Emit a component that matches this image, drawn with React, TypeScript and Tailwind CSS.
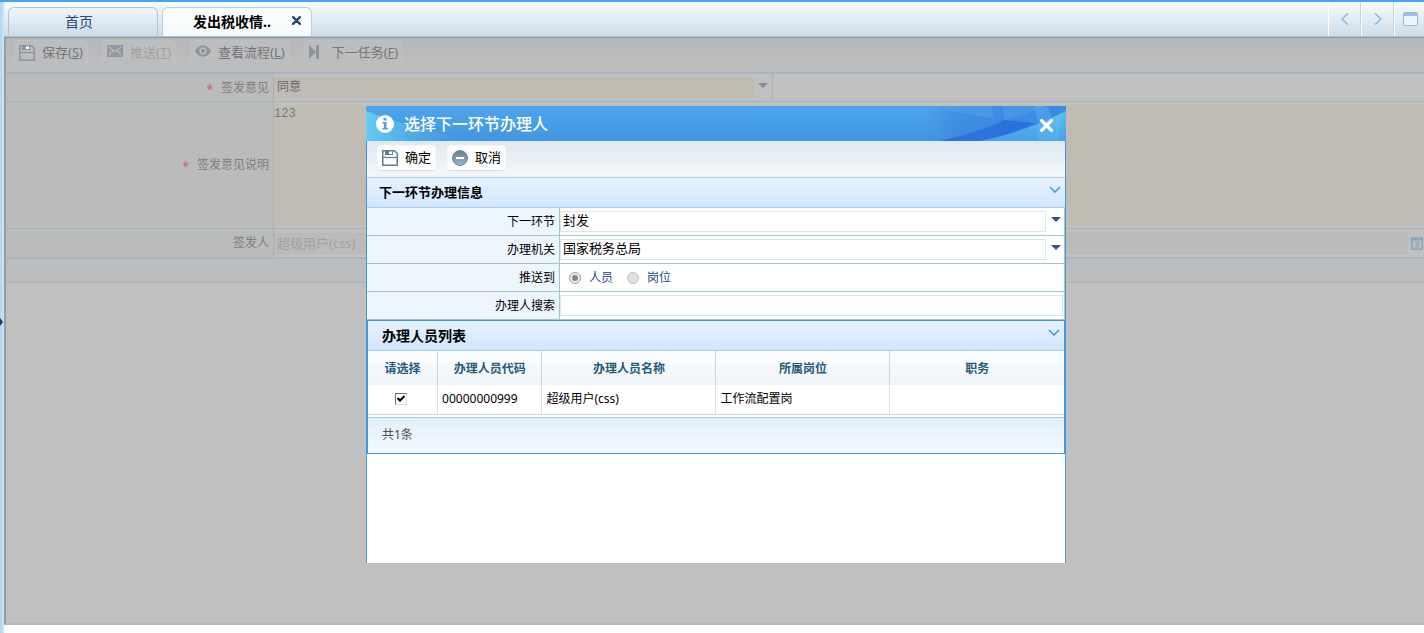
import { useState } from "react";
import type { ReactNode } from "react";

function SaveIcon({ className }: { className: string }) {
  return (
    <svg viewBox="0 0 16 16" className={className} fill="none" stroke="currentColor">
      <path d="M0.75 0.75H12.5L15.25 3.5V15.25H0.75Z" strokeWidth="1.5" />
      <path d="M1 7.5H15" strokeWidth="1.2" />
      <path d="M3 1H11V5H3Z" fill="currentColor" stroke="none" />
      <path d="M7 1.5H10V4H7Z" fill="#fff" stroke="none" />
    </svg>
  );
}

function MailIcon() {
  return (
    <svg viewBox="0 0 16 12" className="mb-1 h-3 w-4 shrink-0">
      <path d="M0 0H16V12H0Z" fill="#92989d" />
      <path d="M2 2L8 6.5L14 2M2 10L6 5.5M14 10L10 5.5" fill="none" stroke="#babbbc" strokeWidth="1.2" />
    </svg>
  );
}

function EyeIcon() {
  return (
    <svg viewBox="0 0 16 12" className="mb-1 h-3 w-4 shrink-0">
      <path d="M0 6C3.5 -1.5 12.5 -1.5 16 6C12.5 13.5 3.5 13.5 0 6Z" fill="#8b959e" />
      <circle cx="8" cy="6" r="2.8" fill="none" stroke="#bcbdbf" strokeWidth="1.6" />
    </svg>
  );
}

function NextIcon() {
  return (
    <svg viewBox="0 0 16 14" className="mb-[2px] h-[14px] w-4 shrink-0" fill="#8b959e">
      <path d="M0 0L7 7L0 14ZM7 0H10V14H7Z" />
    </svg>
  );
}

function CancelIcon() {
  return (
    <svg viewBox="0 0 16 16" className="size-4 shrink-0">
      <defs>
        <linearGradient id="cancelFill" x1="0" x2="0" y1="0" y2="1">
          <stop offset="0" stopColor="#657f93" />
          <stop offset="1" stopColor="#9db4c6" />
        </linearGradient>
      </defs>
      <circle cx="8" cy="8" r="7.5" fill="url(#cancelFill)" stroke="#6e879b" />
      <path d="M4 7H12V9H4Z" fill="#fff" />
    </svg>
  );
}

function CloseIcon({ className }: { className: string }) {
  return (
    <svg viewBox="0 0 12 12" className={className} fill="none" stroke="currentColor" strokeLinecap="round">
      <path d="M1.5 1.5L10.5 10.5M10.5 1.5L1.5 10.5" strokeWidth="3" />
    </svg>
  );
}

function Chevron({ className }: { className: string }) {
  return (
    <svg viewBox="0 0 12 7" className={className} fill="none" stroke="currentColor">
      <path d="M1 1L6 6L11 1" strokeWidth="1.5" />
    </svg>
  );
}

function Caret({ className }: { className: string }) {
  return (
    <svg viewBox="0 0 10 5" className={className} fill="currentColor">
      <path d="M0 0H10L5 5Z" />
    </svg>
  );
}

function CalendarIcon() {
  return (
    <svg viewBox="0 0 12 14" className="h-[14px] w-3 shrink-0">
      <rect x="0.75" y="1.75" width="10.5" height="11.5" rx="1" fill="#b9bdc1" stroke="#8ba4bd" strokeWidth="1.5" />
      <path d="M0.5 1.5H11.5V4.5H0.5Z" fill="#8ba4bd" />
      <path d="M3 0V2.5M6 0V2.5M9 0V2.5" stroke="#a5b5c4" />
      <path d="M4.5 6.5H7V11M5 8.5H7M4.5 11H7" fill="none" stroke="#8ba4bd" strokeWidth="1.2" />
    </svg>
  );
}

function HeaderArt() {
  return (
    <svg viewBox="0 0 140 35" className="absolute top-0 right-0 h-[35px] w-[140px]">
      <defs>
        <linearGradient id="headDeep" x1="0" x2="1">
          <stop offset="0" stopColor="#3682dc" stopOpacity="0" />
          <stop offset="0.25" stopColor="#3682dc" stopOpacity="0.6" />
          <stop offset="1" stopColor="#3a86e2" stopOpacity="0.9" />
        </linearGradient>
        <linearGradient id="headBand" x1="0" x2="1">
          <stop offset="0" stopColor="#2e74d8" />
          <stop offset="1" stopColor="#2a70dc" />
        </linearGradient>
        <linearGradient id="headGlow" x1="0" x2="0" y1="0" y2="1">
          <stop offset="0" stopColor="#5cbcee" />
          <stop offset="1" stopColor="#47a2e8" />
        </linearGradient>
      </defs>
      <path d="M0 0H140V35H0Z" fill="url(#headDeep)" />
      <path d="M17 0H66L68 12Q40 8 20 4Z" fill="#56a7ec" opacity="0.45" />
      <path d="M76 0H120Q102 8 79 14Z" fill="#56a7ec" opacity="0.4" />
      <path d="M14 35Q50 27 79 14L110 17Q85 29 54 35Z" fill="url(#headBand)" />
      <path d="M79 14Q103 8 122 0H140V5L110 17Z" fill="#3c8ce4" />
      <path d="M54 35Q100 26 140 5V35Z" fill="url(#headGlow)" />
      <path d="M108 0L112 16V35H132L136 7L130 0Z" fill="#74c8f4" opacity="0.25" />
      <path d="M121 0H131L135 7L126 11Z" fill="#2e7be0" opacity="0.6" />
    </svg>
  );
}

interface PageButtonProps {
  icon: ReactNode;
  text: string;
  hotKey: string;
  disabled?: boolean;
}

function PageButton({ icon, text, hotKey, disabled = false }: PageButtonProps) {
  return (
    <button
      type="button"
      disabled={disabled}
      className="flex h-[26px] items-center gap-[7px] rounded-sm border border-[#c0c0c0] bg-[#bcbdbe] px-1 text-[13px] text-[#737578] disabled:text-[#a0a2a4]">
      {icon}
      <span>
        {text}(<u>{hotKey}</u>)
      </span>
    </button>
  );
}

function PageLabel({ id, text, required = false }: { id: string; text: string; required?: boolean }) {
  return (
    <label
      htmlFor={id}
      className="flex w-[268px] shrink-0 items-center justify-end gap-2 border-r border-[#a9b2b3] bg-[#babbbd] pr-1 text-xs text-[#7d7e80]">
      {required && <span className="pt-1 font-bold text-[#d07070]">*</span>}
      {text}
    </label>
  );
}

function Row({ id, label, children }: { id?: string; label: string; children: ReactNode }) {
  return (
    <div className="flex h-7 border-b border-[#a3c6c4]">
      <label htmlFor={id} className="flex w-[193px] shrink-0 items-center justify-end border-r border-[#a3c6c4] bg-[#edf5fd] pr-1">
        {label}
      </label>
      <div className="flex min-w-0 flex-1 items-center">{children}</div>
    </div>
  );
}

function ComboBox({ id, value }: { id: string; value: string }) {
  return (
    <div className="flex flex-1 items-center gap-[5px] pr-[3px]">
      <select id={id} className="h-[21px] min-w-0 flex-1 appearance-none border border-[#dbe7ee] bg-white px-[2px] pb-1 text-[13px] leading-4">
        <option>{value}</option>
      </select>
      <Caret className="mb-1 h-[5px] w-[10px] text-[#2f5091]" />
    </div>
  );
}

function SectionTitle({ text, className }: { text: string; className: string }) {
  return (
    <div className="flex h-[30px] items-center justify-between border-b border-[#a9cbe6] bg-linear-to-b from-[#e7f2fe] to-[#d0e6fd] pr-1">
      <h2 className={className}>{text}</h2>
      <button type="button" aria-label="收起" className="mb-[6px]">
        <Chevron className="h-[7px] w-3 text-[#3e97dc]" />
      </button>
    </div>
  );
}

const columns = ["请选择", "办理人员代码", "办理人员名称", "所属岗位", "职务"];
const people = [{ code: "00000000999", name: "超级用户(css)", post: "工作流配置岗", duty: "" }];
const radioClass =
  "size-3 appearance-none rounded-full border border-[#c2c2c2] bg-[#e0e0e0] checked:border-[#a2a2a2] checked:bg-radial checked:from-[#858585] checked:from-35% checked:to-[#ededed] checked:to-50%";

function HandlerDialog() {
  const [target, setTarget] = useState("person");
  const [checked, setChecked] = useState(true);

  return (
    <div role="dialog" aria-label="选择下一环节办理人" className="w-[700px] bg-white text-xs text-black">
      <header className="relative flex h-[35px] items-center justify-between bg-linear-to-b from-[#4ea4ee] to-[#4196df] pr-[13px] pl-[10px] text-white">
        <svg viewBox="0 0 110 35" className="absolute top-0 left-0 h-[35px] w-[110px]">
          <defs>
            <linearGradient id="headLeft" x1="0" x2="1">
              <stop offset="0" stopColor="#68cbf4" />
              <stop offset="0.5" stopColor="#52b0ea" stopOpacity="0.6" />
              <stop offset="1" stopColor="#4aa0e8" stopOpacity="0" />
            </linearGradient>
          </defs>
          <path d="M0 5Q50 24 110 35H0Z" fill="url(#headLeft)" />
        </svg>
        <div className="relative flex items-center gap-[10px]">
          <svg viewBox="0 0 18 18" className="size-[18px]">
            <circle cx="9" cy="9" r="9" fill="#fff" />
            <path d="M7.5 3H10.5V5.5H7.5ZM6.5 7H10.5V13H12V14.5H6.5V13H7.8V8.5H6.5Z" fill="#4ba3e8" />
          </svg>
          <h1 className="text-base font-medium">选择下一环节办理人</h1>
        </div>
        <HeaderArt />
        <button type="button" aria-label="关闭" className="relative mt-1">
          <CloseIcon className="size-[13px]" />
        </button>
      </header>

      <div className="border-x border-[#4398db] pb-[109px]">
        <div className="flex h-[37px] items-center gap-[11px] border-b border-[#a9cbe6] bg-linear-to-b from-[#dfe9f0] to-[#f3f7fa] px-[10px] pb-[2px]">
          <button type="button" className="flex h-[26px] items-center gap-[7px] rounded-sm border border-[#f8f8f8] border-b-[#d9dddf] bg-[#fcfcfc] px-1 text-[13px]">
            <SaveIcon className="size-4 text-[#637d92]" />
            确定
          </button>
          <button type="button" className="flex h-[26px] items-center gap-[7px] rounded-sm border border-[#f8f8f8] border-b-[#d9dddf] bg-[#fcfcfc] px-1 text-[13px]">
            <CancelIcon />
            取消
          </button>
        </div>

        <SectionTitle text="下一环节办理信息" className="pl-3 text-[13px] font-bold" />
        <div className="border-r border-[#a3c6c4]">
          <Row id="next-step" label="下一环节">
            <ComboBox id="next-step" value="封发" />
          </Row>
          <Row id="office" label="办理机关">
            <ComboBox id="office" value="国家税务总局" />
          </Row>
          <Row label="推送到">
            <div className="flex items-center gap-[14px] px-[9px] text-[#1d4488]">
              <label className="flex items-center gap-2">
                <input type="radio" name="target" className={radioClass} checked={target === "person"} onChange={() => setTarget("person")} />
                人员
              </label>
              <label className="flex items-center gap-2">
                <input type="radio" name="target" className={radioClass} checked={target === "post"} onChange={() => setTarget("post")} />
                岗位
              </label>
            </div>
          </Row>
          <Row id="search" label="办理人搜索">
            <input id="search" type="text" className="mr-px h-[21px] min-w-0 flex-1 border border-[#dbe7ee] px-[2px]" />
          </Row>
        </div>

        <section className="border border-[#4398db]">
          <SectionTitle text="办理人员列表" className="pl-[14px] text-sm font-bold" />
          <table className="w-full table-fixed border-collapse">
            <colgroup>
              <col className="w-[10%]" />
              <col className="w-[15%]" />
              <col className="w-[25%]" />
              <col className="w-[25%]" />
              <col className="w-[25%]" />
            </colgroup>
            <thead>
              <tr className="h-[34px] bg-linear-to-b from-[#fdfeff] to-[#eff4f8] text-[#265a79]">
                {columns.map((name) => (
                  <th key={name} className="border-r border-[#c3d9da] px-0 pt-[2px] pb-0 font-bold last:border-r-0">
                    {name}
                  </th>
                ))}
              </tr>
            </thead>
            <tbody>
              {people.map((p) => (
                <tr key={p.code} className="h-[29px] border-b border-[#c0d8d8]">
                  <td className="border-r border-[#d5e3e3] py-0 pr-1 pl-0">
                    <label className="relative mx-auto flex size-3 items-center justify-center">
                      <input
                        type="checkbox"
                        aria-label="选择"
                        className="size-3 appearance-none border border-[#d8d8d8] border-t-[#707070] border-l-[#707070] bg-white"
                        checked={checked}
                        onChange={(e) => setChecked(e.target.checked)}
                      />
                      {checked && (
                        <svg viewBox="0 0 8 8" className="pointer-events-none absolute size-2">
                          <path d="M0.5 3L3 5.5L7.5 1" fill="none" stroke="#000" strokeWidth="2" />
                        </svg>
                      )}
                    </label>
                  </td>
                  <td className="border-r border-[#d5e3e3] px-1 py-0">{p.code}</td>
                  <td className="border-r border-[#d5e3e3] px-1 py-0">{p.name}</td>
                  <td className="border-r border-[#d5e3e3] px-1 py-0">{p.post}</td>
                  <td className="px-1 py-0">{p.duty}</td>
                </tr>
              ))}
            </tbody>
          </table>
          <div className="mt-[2px] flex h-9 items-center border-t border-[#a9cbe6] bg-linear-to-b from-[#e0eefb] to-[#f5faff] px-[14px] text-[#4d4d4d]">
            共1条
          </div>
        </section>
      </div>
    </div>
  );
}

export default function App() {
  return (
    <div className="flex h-screen flex-col overflow-hidden bg-white font-['Noto_Sans','Noto_Sans_CJK_SC',sans-serif] text-xs">
      <div className="h-[2px] shrink-0 bg-[#46a3f6]" />
      <div className="flex min-h-0 flex-1">
        <div className="flex w-1 shrink-0 items-center bg-linear-to-r from-[#b4d3f4] to-[#c8e5fb] pt-2">
          <svg viewBox="0 0 3 8" className="h-2 w-[3px]">
            <path d="M0 0L3 4L0 8Z" fill="#173a6c" />
          </svg>
        </div>
        <div className="flex min-w-0 flex-1 flex-col pb-2">
          <nav className="flex h-[35px] shrink-0 items-end justify-between border-b border-[#a6c1dd] bg-linear-to-b from-[#f9fcfe] to-[#cbdce9]">
            <div className="flex gap-1 pl-1 text-sm">
              <button type="button" className="h-[29px] w-[150px] rounded-t-md border border-b-0 border-[#aec5e5] bg-linear-to-b from-[#f1f7fb] to-[#cbdce9] pr-2 text-[#2c4770]">
                首页
              </button>
              <div className="flex h-[29px] w-[150px] items-center rounded-t-md border border-b-0 border-[#b8d0ee] bg-linear-to-b from-white to-[#f4f9fa] pr-[10px] pl-[30px]">
                <button type="button" className="flex-1 text-left font-bold">
                  发出税收情..
                </button>
                <button type="button" aria-label="关闭标签" className="mb-[3px]">
                  <CloseIcon className="size-[9px] text-[#2d406a]" />
                </button>
              </div>
            </div>
            <div className="flex h-full text-[#93b9de]">
              <button type="button" aria-label="向左" className="flex w-[33px] items-center justify-center border-r border-l border-r-[#c3d5e5] border-l-white">
                <Chevron className="h-2 w-[14px] rotate-90" />
              </button>
              <button type="button" aria-label="向右" className="flex w-[33px] items-center justify-center border-r border-l border-r-[#c3d5e5] border-l-white">
                <Chevron className="h-2 w-[14px] -rotate-90" />
              </button>
              <button type="button" aria-label="窗口" className="flex w-[30px] items-center border-l border-white pl-2">
                <svg viewBox="0 0 15 14" className="h-[14px] w-[15px]">
                  <rect x="0.5" y="0.5" width="14" height="13" rx="1.5" fill="#edf4fa" stroke="#93b9de" />
                  <path d="M1 1H14V4H1Z" fill="#9dc0e2" />
                </svg>
              </button>
            </div>
          </nav>

          <main className="relative min-h-0 flex-1 border-t border-b-2 border-l-2 border-t-[#949596] border-b-[#b9b9b9] border-l-[#9b9c9d] bg-[#c0c0c0]">
            <div className="flex h-9 items-start gap-[14px] border-b-2 border-[#aab4be] bg-linear-to-b from-[#b5b7b9] to-[#bdbec0] px-2 pt-[2px]">
              <PageButton icon={<SaveIcon className="size-4 text-[#8b959e]" />} text="保存" hotKey="S" />
              <PageButton icon={<MailIcon />} text="推送" hotKey="T" disabled />
              <PageButton icon={<EyeIcon />} text="查看流程" hotKey="L" />
              <PageButton icon={<NextIcon />} text="下一任务" hotKey="F" />
            </div>
            <div className="flex h-7 border-b border-[#a9b2b3]">
              <PageLabel id="opinion" text="签发意见" required />
              <div className="flex w-[499px] items-center gap-1 border-r border-[#a9b2b3] pr-1">
                <select id="opinion" className="h-[21px] min-w-0 flex-1 appearance-none border border-[#bbbab6] bg-[#c0bcb4] px-[2px] pb-[2px] text-[#66676a]">
                  <option>同意</option>
                </select>
                <Caret className="mb-1 h-[5px] w-[10px] text-[#858c9c]" />
              </div>
            </div>
            <div className="flex h-[127px] border-b border-[#a9b2b3]">
              <PageLabel id="remark" text="签发意见说明" required />
              <textarea
                id="remark"
                className="my-[3px] min-w-0 flex-1 resize-none bg-[#c0bcb4] pt-px font-['Liberation_Mono',monospace] text-xs text-[#77777a]"
                defaultValue="123"
              />
            </div>
            <div className="flex h-[30px] border-b-2 border-[#aab4be]">
              <PageLabel id="issuer" text="签发人" />
              <div className="flex min-w-0 flex-1 items-center gap-[3px] pr-px">
                <input id="issuer" type="text" readOnly value="超级用户(css)" className="h-[21px] min-w-0 flex-1 border border-[#b6b8ba] bg-[#bbbbbb] px-[2px] pb-[2px] text-[13px] text-[#a0a1a2]" />
                <CalendarIcon />
              </div>
            </div>
            <div className="h-6 border-b border-[#a9b2b3] bg-[#bbbcbe]" />

            <div className="absolute inset-x-0 top-[68px] flex justify-center pl-[2px]">
              <HandlerDialog />
            </div>
          </main>
        </div>
      </div>
    </div>
  );
}
